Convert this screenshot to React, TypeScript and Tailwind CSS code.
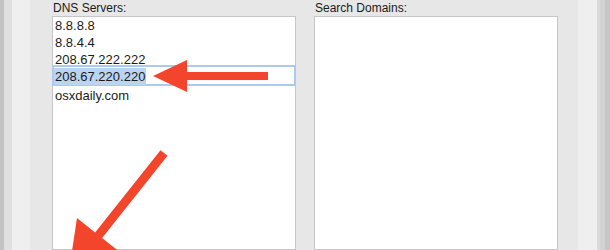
import React from "react";

const servers = ["8.8.8.8", "8.8.4.4", "208.67.222.222"];

export default function App() {
  return (
    <div
      className="relative flex w-[610px] h-[250px] overflow-hidden bg-[#e7e7e7] text-[#1b1b1b]"
      style={{ fontFamily: '"Liberation Sans", Arial, sans-serif' }}
    >
      {/* window edge strips on the left */}
      <div className="w-[4px] bg-[#c3c3c3]" />
      <div className="w-[8px] bg-[#e0e0e0]" />
      <div className="w-[18px] bg-[#efefef]" />

      {/* main panel */}
      <div className="flex w-[548px] gap-[18px] pl-[22px] pr-[20px]">
        <div className="flex w-[244px] flex-col">
          <div className="h-[16px] text-[12px] leading-[16px] pl-px">DNS Servers:</div>
          <div className="flex-1 border border-[#c6c6c6] bg-white text-[13px] leading-[17px]">
            {servers.map((s) => (
              <div key={s} className="h-[17px] pl-[2px]">
                {s}
              </div>
            ))}
            <div className="relative h-[17px]">
              <div className="absolute -left-px -right-px -top-[3px] -bottom-px border-2 border-[#abcaee]" />
              <span className="relative ml-px px-px py-px bg-[#bad4f1]">208.67.220.220</span>
            </div>
            <div className="h-[17px] pl-[2px] mt-[2px]">osxdaily.com</div>
          </div>
        </div>
        <div className="flex w-[244px] flex-col">
          <div className="h-[16px] text-[12px] leading-[16px] pl-px">Search Domains:</div>
          <div className="flex-1 border border-[#c6c6c6] bg-white" />
        </div>
      </div>

      {/* window edge strips on the right */}
      <div className="w-[19px] bg-[#efefef]" />
      <div className="w-[3px] bg-[#dadada]" />
      <div className="w-[5px] bg-[#d2d2d2]" />
      <div className="flex-1 bg-[#c6c6c6]" />

      {/* annotation arrows */}
      <svg className="absolute left-0 top-0" width="610" height="250" viewBox="0 0 610 250">
        <polygon
          fill="#f2452c"
          points="153,76 187,60 187,72 268,72 268,80 187,80 187,92"
        />
        <polygon
          fill="#f2452c"
          points="160.5,150.2 167.5,155.8 102.1,238 120.2,252.4 68.7,272.8 77,218 95.1,232.4"
        />
      </svg>
    </div>
  );
}
